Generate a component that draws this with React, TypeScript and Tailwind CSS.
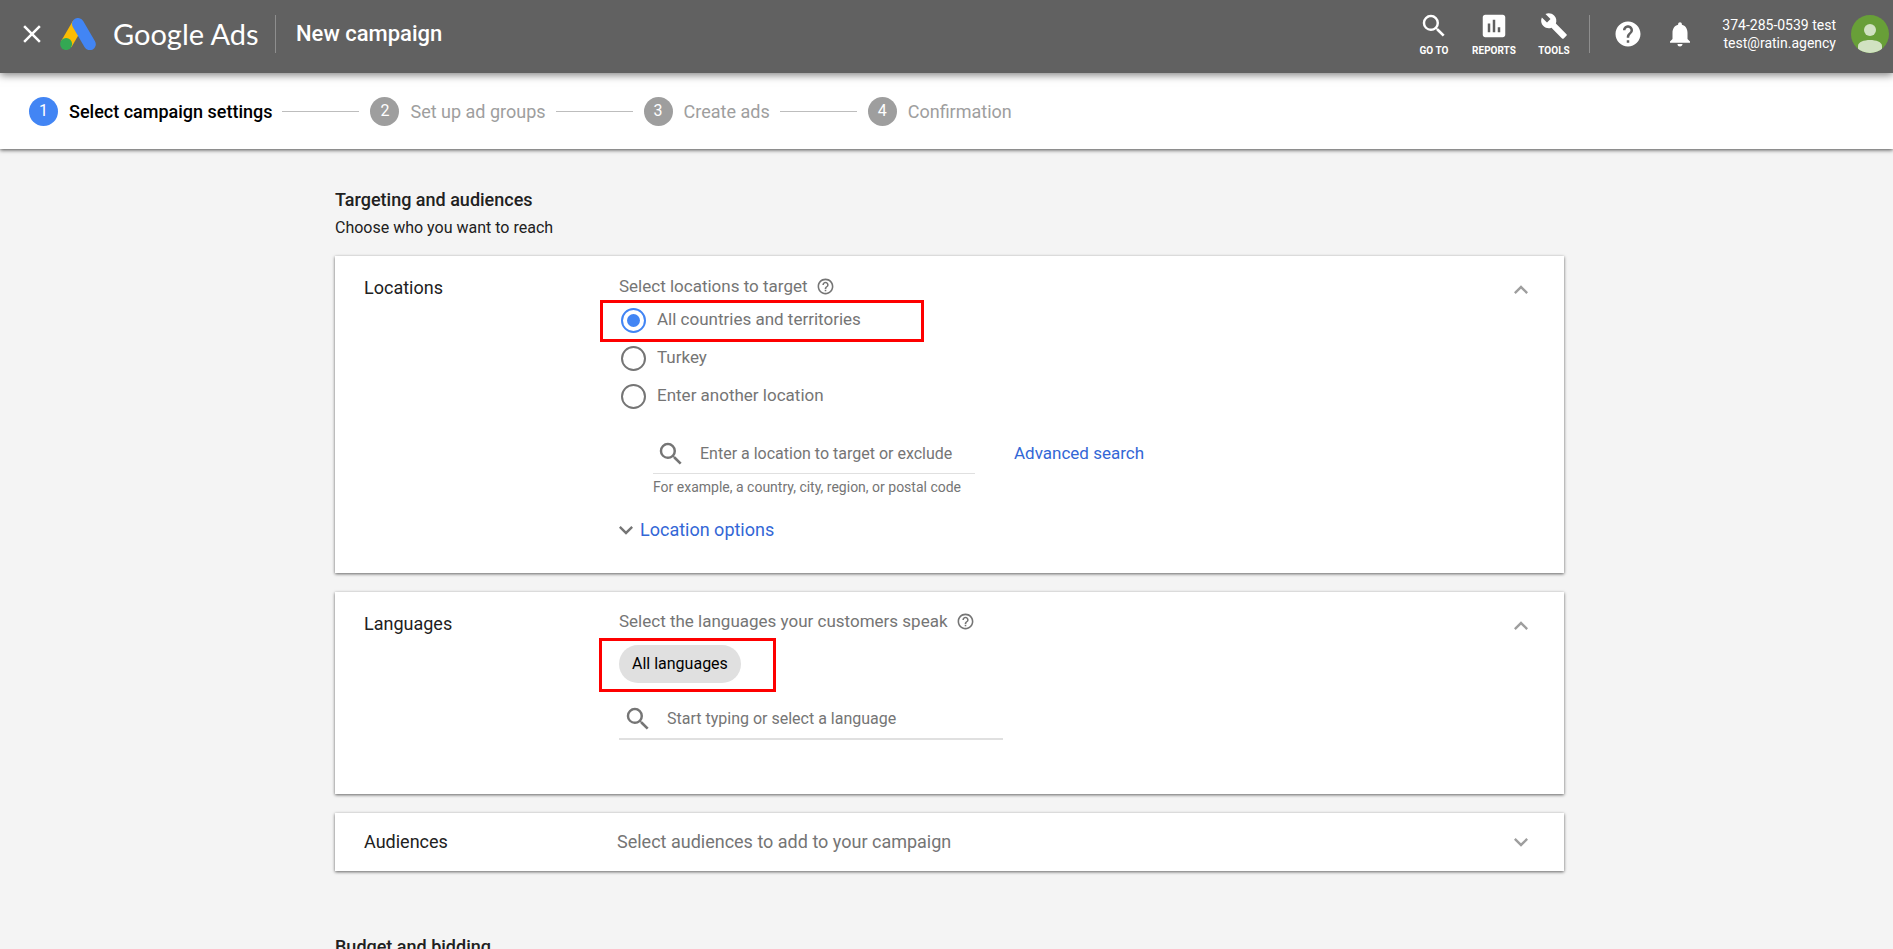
import { useState } from "react";
import {
  MdAssessment,
  MdBuild,
  MdClose,
  MdExpandLess,
  MdExpandMore,
  MdHelp,
  MdHelpOutline,
  MdNotifications,
  MdSearch,
} from "react-icons/md";

const steps = ["Select campaign settings", "Set up ad groups", "Create ads", "Confirmation"];

const locations = [
  { id: "all", label: "All countries and territories" },
  { id: "turkey", label: "Turkey" },
  { id: "other", label: "Enter another location" },
];

export default function App() {
  return (
    <div className="flex h-screen flex-col overflow-hidden bg-[#f4f4f4] font-[Roboto,sans-serif] text-[#212121]">
      <TopBar />
      <Stepper current={0} />

      <main className="min-h-0 flex-1 overflow-y-auto [scrollbar-width:none]">
        <div className="mx-auto max-w-[1235px] pt-[39px] pl-[6px]">
          <h2 className="text-lg leading-6 font-medium">Targeting and audiences</h2>
          <p className="mt-1 leading-6">Choose who you want to reach</p>

          <div className="mt-4 flex flex-col gap-[19px]">
            <LocationsCard />
            <LanguagesCard />
            <AudiencesCard />
          </div>

          <h2 className="mt-16 pb-10 text-lg leading-6 font-medium">Budget and bidding</h2>
        </div>
      </main>
    </div>
  );
}

function TopBar() {
  return (
    <header className="z-10 flex h-[73px] shrink-0 items-start bg-[#616161] text-white shadow-[0_2px_8px_rgba(0,0,0,0.5)]">
      <div className="flex h-[68px] items-center pl-[17px]">
        <button aria-label="Close">
          <MdClose size={30} />
        </button>
        <AdsLogo />
        <span className="ml-[17px] w-[148px] font-[Lato,sans-serif] text-[29px] leading-9 whitespace-nowrap">
          Google Ads
        </span>
        <div className="ml-[14px] h-[38px] w-px bg-[#8e8e8e]" />
        <h1 className="ml-5 text-[22px] leading-7 font-medium">New campaign</h1>
      </div>

      <div className="ml-auto flex h-[68px] items-center pr-1">
        <NavTool label="GO TO" icon={<MdSearch size={30} />} />
        <NavTool label="REPORTS" icon={<MdAssessment size={30} />} />
        <NavTool label="TOOLS" icon={<MdBuild size={28} />} />
        <div className="ml-[5px] h-[38px] w-px bg-[#8e8e8e]" />
        <button aria-label="Help" className="ml-[23px]">
          <MdHelp size={30} />
        </button>
        <button aria-label="Notifications" className="ml-[22px]">
          <MdNotifications size={30} />
        </button>
        <div className="w-[141px] text-right text-sm leading-[18px]">
          <div>374-285-0539 test</div>
          <div>test@ratin.agency</div>
        </div>
        <button aria-label="Account" className="ml-[15px]">
          <Avatar />
        </button>
      </div>
    </header>
  );
}

function NavTool({ label, icon }: { label: string; icon: React.ReactNode }) {
  return (
    <button className="flex w-[60px] flex-col items-center">
      <span className="flex h-[30px] items-center">{icon}</span>
      <span className="mt-1 text-[10px] leading-3 font-bold">{label}</span>
    </button>
  );
}

function AdsLogo() {
  return (
    <svg className="ml-[13px]" width="36" height="32" viewBox="0 0 36 32" aria-hidden="true">
      <path d="M18 6 L6.200 26.300" stroke="#fbbc04" strokeWidth="12" />
      <path d="M18 6 L29.800 26.200" stroke="#4285f4" strokeWidth="12" strokeLinecap="round" />
      <circle cx="6.100" cy="26.100" r="6" fill="#34a853" />
    </svg>
  );
}

function Avatar() {
  return (
    <svg width="38" height="38" viewBox="0 0 38 38" aria-hidden="true">
      <defs>
        <clipPath id="avatar">
          <circle cx="19" cy="19" r="19" />
        </clipPath>
      </defs>
      <g clipPath="url(#avatar)">
        <rect width="38" height="38" fill="#689f38" />
        <circle cx="19" cy="15" r="6" fill="#d1e2c2" />
        <path d="M7 38v-7c0-4 6-6 12-6s12 2 12 6v7z" fill="#d1e2c2" />
      </g>
    </svg>
  );
}

function Stepper({ current }: { current: number }) {
  return (
    <nav className="z-[5] flex h-[76px] shrink-0 items-center bg-white pl-[29px] shadow-[0_1px_4px_rgba(0,0,0,0.7)]">
      <ol className="flex items-center text-lg leading-6">
        {steps.map((s, i) => (
          <li key={s} className="flex items-center">
            {i > 0 && <span className="mr-[11px] ml-[10px] h-px w-[77px] bg-[#bdbdbd]" />}
            <span
              className={`flex size-[29px] items-center justify-center rounded-full text-base text-white ${
                i === current ? "bg-[#4285f4]" : "bg-[#9e9e9e]"
              }`}
            >
              {i + 1}
            </span>
            <span className={`ml-[11px] pt-[2px] ${i === current ? "font-medium text-black" : "text-[#9e9e9e]"}`}>
              {s}
            </span>
          </li>
        ))}
      </ol>
    </nav>
  );
}

const card = "flex bg-white pr-[29px] pl-[29px] shadow-[0_1px_3px_rgba(0,0,0,0.6)]";
const cardTitle = "w-[255px] shrink-0 text-lg leading-6";

function LocationsCard() {
  const [selected, setSelected] = useState("all");

  return (
    <section className={`${card} pt-5 pb-7`}>
      <h3 className={cardTitle}>Locations</h3>
      <div className="-mt-[2px] flex-1 text-[#757575]">
        <FieldLabel text="Select locations to target" />

        <div className="relative mt-[3px] w-fit">
          {locations.map((l) => (
            <label key={l.id} className="flex h-[38px] items-center gap-[11px] pl-[2px] text-[17px] leading-6">
              <input
                type="radio"
                name="location"
                checked={selected === l.id}
                onChange={() => setSelected(l.id)}
                className="grid size-[25px] shrink-0 appearance-none place-items-center rounded-full border-2 border-[#757575] checked:border-[#4285f4] checked:before:size-[13px] checked:before:rounded-full checked:before:bg-[#4285f4]"
              />
              <span className="pb-[2px]">{l.label}</span>
            </label>
          ))}
          {/* highlight */}
          <div className="pointer-events-none absolute -top-px -left-[19px] h-[42px] w-[324px] border-3 border-[#fe0000]" />
        </div>

        <div className="mt-[19px] flex items-start pl-[34px]">
          <div className="w-[322px]">
            <div className="flex h-10 items-center gap-[14px] border-b border-[#e0e0e0] pl-[3px]">
              <MdSearch size={30} className="shrink-0" />
              <input
                aria-label="Location"
                placeholder="Enter a location to target or exclude"
                className="min-w-0 flex-1 outline-none placeholder:text-[#757575]"
              />
            </div>
            <p className="mt-[3px] text-sm leading-5">For example, a country, city, region, or postal code</p>
          </div>
          <a href="#advanced" className="ml-[39px] text-[17px] leading-[38px] text-[#3367d6]">
            Advanced search
          </a>
        </div>

        <button className="mt-[18px] -ml-[7px] flex items-center text-lg leading-[30px]">
          <MdExpandMore size={28} />
          <span className="text-[#3367d6]">Location options</span>
        </button>
      </div>
      <Toggle open />
    </section>
  );
}

function LanguagesCard() {
  return (
    <section className={`${card} pt-5 pb-[54px]`}>
      <h3 className={cardTitle}>Languages</h3>
      <div className="-mt-[3px] flex-1 text-[#757575]">
        <FieldLabel text="Select the languages your customers speak" />

        <div className="relative mt-3 w-fit">
          <button className="h-[38px] rounded-full bg-[#e0e0e0] px-[13px] text-base text-black">All languages</button>
          {/* highlight */}
          <div className="pointer-events-none absolute -top-[7px] -left-5 h-[54px] w-[177px] border-3 border-[#fe0000]" />
        </div>

        <div className="mt-[17px] flex h-10 w-[384px] items-center gap-[14px] border-b-2 border-[#e0e0e0] pl-1">
          <MdSearch size={30} className="shrink-0" />
          <input
            aria-label="Language"
            placeholder="Start typing or select a language"
            className="min-w-0 flex-1 outline-none placeholder:text-[#757575]"
          />
        </div>
      </div>
      <Toggle open />
    </section>
  );
}

function AudiencesCard() {
  return (
    <section className={`${card} h-[58px] items-center`}>
      <h3 className="w-[253px] shrink-0 text-lg leading-6">Audiences</h3>
      <p className="flex-1 text-lg leading-6 text-[#757575]">Select audiences to add to your campaign</p>
      <Toggle open={false} />
    </section>
  );
}

function FieldLabel({ text }: { text: string }) {
  return (
    <div className="flex items-center gap-2 text-[17px] leading-6">
      {text}
      <MdHelpOutline size={19} />
    </div>
  );
}

function Toggle({ open }: { open: boolean }) {
  return (
    <button aria-label={open ? "Collapse" : "Expand"} className="h-7 text-[#9e9e9e]">
      {open ? <MdExpandLess size={28} /> : <MdExpandMore size={28} />}
    </button>
  );
}
